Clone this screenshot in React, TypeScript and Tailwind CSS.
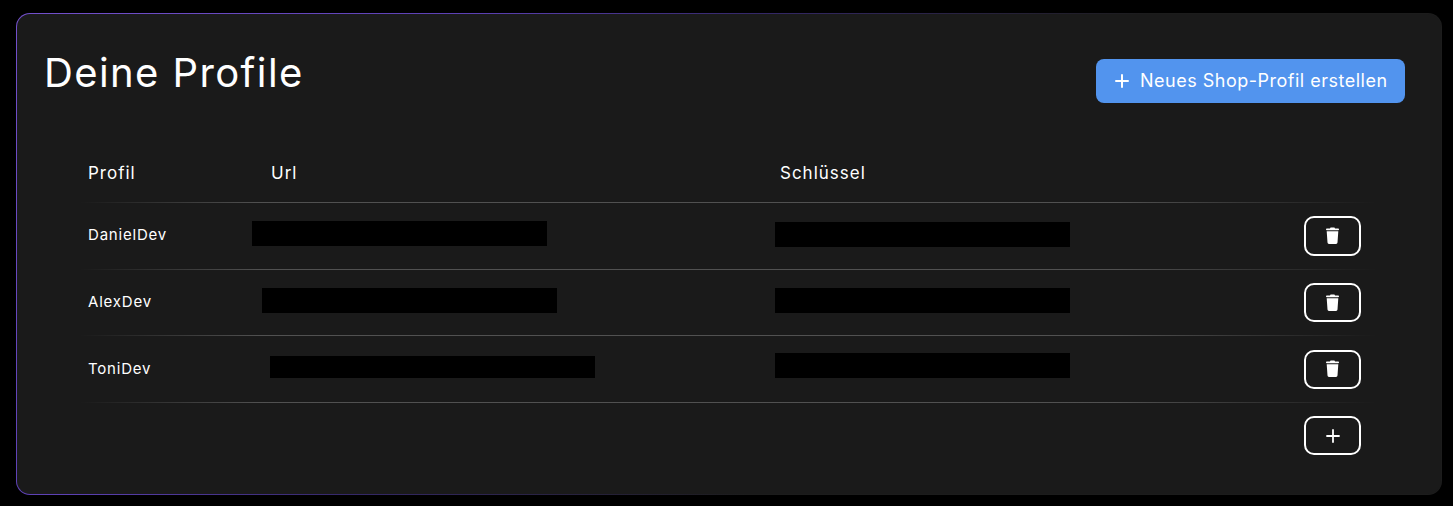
import React from "react";

const font = { fontFamily: '"Inter", "Noto Sans", sans-serif' };

function Trash() {
  return (
    <svg width="15" height="18" viewBox="0 0 14 18" fill="#fff">
      <rect x="4.5" y="0.5" width="5" height="2" rx="1" />
      <rect x="0.5" y="1.6" width="13" height="1.6" rx="0.8" />
      <path d="M1.2 4.2h11.6l-.8 11.4a1.5 1.5 0 0 1-1.5 1.4H3.5A1.5 1.5 0 0 1 2 15.6L1.2 4.2z" />
    </svg>
  );
}

function Plus({ size, width }: { size: number; width: number }) {
  return (
    <svg width={size} height={size} viewBox="0 0 14 14" stroke="#fff" strokeWidth={width} strokeLinecap="round">
      <path d="M7 1v12M1 7h12" />
    </svg>
  );
}

function Divider() {
  return <div className="h-px w-full bg-[linear-gradient(90deg,rgba(255,255,255,0),rgba(255,255,255,0.24)_14%,rgba(255,255,255,0.24)_80%,rgba(255,255,255,0))]" />;
}

const rows = [
  { name: "DanielDev", h: "h-[66px]", namePad: "pb-[2px]", urlPad: "pl-[5px]", urlBar: "w-[295px] h-[25px] mb-[5px]", keyBar: "h-[25px] mb-[3px]", btn: "h-10" },
  { name: "AlexDev", h: "h-[65px]", namePad: "pb-[1px]", urlPad: "pl-[15px]", urlBar: "w-[295px] h-[25px] mb-[4px]", keyBar: "h-[25px] mb-[4px]", btn: "h-[39px]" },
  { name: "ToniDev", h: "h-[66px]", namePad: "pb-0", urlPad: "pl-[23px]", urlBar: "w-[325px] h-[22px] mb-[4px]", keyBar: "h-[25px] mb-[7px]", btn: "h-[39px]" },
];

export default function App() {
  return (
    <div className="w-[1453px] h-[506px] bg-black pt-[13px] pl-4 pr-[11px] pb-[11px]" style={font}>
      <div className="h-[482px] rounded-[14px] p-px bg-[linear-gradient(130deg,#7350cc_0%,#5c40b4_25%,#35286a_40%,#1c1c1c_62%)]">
        <div className="h-full rounded-[13px] bg-[#1a1a1a] pl-7 pr-9 pt-[31px] text-white">
          <div className="flex items-start justify-between">
            <h1 className="-ml-px text-[40px] leading-[56px] font-normal tracking-[1.4px]">Deine Profile</h1>
            <button className="mt-[14px] h-11 w-[309px] rounded-lg bg-[#5294ee] flex items-center pl-[19px] gap-[11px] text-[18px] tracking-[0.5px]">
              <Plus size={14} width={2} />
              <span className="pb-px">Neues Shop-Profil erstellen</span>
            </button>
          </div>

          <div className="mt-[50px] ml-[34px] mr-[28px]">
            <div className="flex items-center h-[49px] pb-[7px] text-[17px] tracking-[1px]">
              <div className="w-[192px] pl-[9px]">Profil</div>
              <div className="w-[509px]">Url</div>
              <div>Schlüssel</div>
            </div>
            <Divider />
            {rows.map((r) => (
              <React.Fragment key={r.name}>
                <div className={`flex items-center ${r.h}`}>
                  <div className={`w-[168px] pl-[9px] ${r.namePad} text-[15px] tracking-[0.8px]`}>{r.name}</div>
                  <div className={`w-[528px] ${r.urlPad}`}>
                    <div className={`${r.urlBar} bg-black`} />
                  </div>
                  <div className={`w-[295px] ${r.keyBar} bg-black`} />
                  <div className="flex-1 flex justify-end pr-4">
                    <button className={`w-[57px] ${r.btn} rounded-[10px] border-2 border-white flex items-center justify-center`}>
                      <Trash />
                    </button>
                  </div>
                </div>
                <Divider />
              </React.Fragment>
            ))}
            <div className="flex justify-end pr-4 pt-[13px]">
              <button className="w-[57px] h-[39px] rounded-[10px] border-2 border-white flex items-center justify-center">
                <Plus size={14} width={1.8} />
              </button>
            </div>
          </div>
        </div>
      </div>
    </div>
  );
}
